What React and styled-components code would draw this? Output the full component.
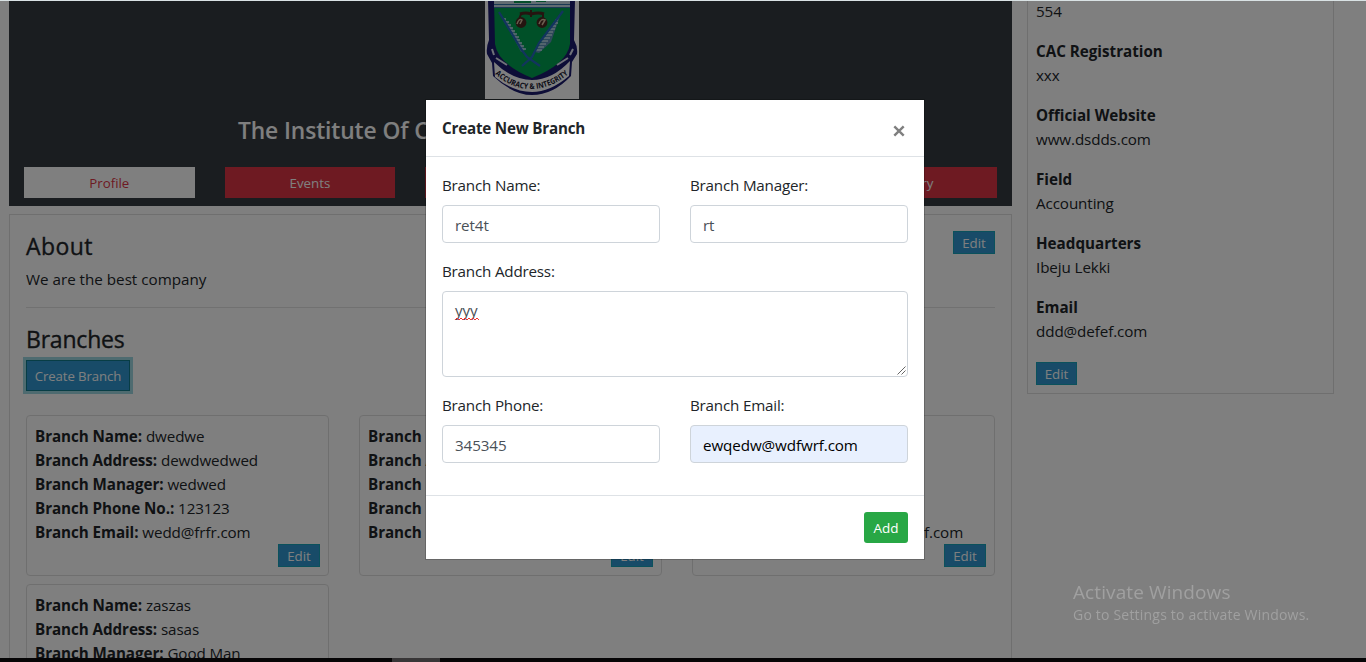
import React from 'react';
import styled, { createGlobalStyle } from 'styled-components';

const Global = createGlobalStyle`
  *, *::before, *::after { box-sizing: border-box; }
  html, body { margin: 0; padding: 0; height: 100%; overflow: hidden; }
  body {
    background: #fff;
    color: #212529;
    font-family: "Open Sans", "Noto Sans", sans-serif;
    font-size: 15.2px;
    letter-spacing: -0.1px;
    line-height: 24px;
  }
`;

const Screen = styled.div`
  width: 1366px;
  height: 662px;
  overflow: hidden;
`;

const Page = styled.div`
  display: flex;
  align-items: flex-start;
  gap: 15px;
  height: 658px;
  padding-left: 9px;
  overflow: hidden;
`;

const Main = styled.main`
  width: 1003px;
  flex: none;
`;

const Banner = styled.header`
  height: 206px;
  padding: 0 15px;
  background: #343a40;
  display: flex;
  flex-direction: column;
`;

const Crest = styled.svg`
  display: block;
  width: 94px;
  height: 99px;
  margin-left: 461px;
  flex: none;
`;

const OrgName = styled.h4`
  margin: 17px 0 22px;
  height: 29px;
  line-height: 29px;
  font-size: 22.8px;
  font-weight: 600;
  letter-spacing: -0.1px;
  color: #fff;
  text-align: center;
  white-space: nowrap;
`;

const Tabs = styled.nav`
  display: grid;
  grid-template-columns: repeat(5, 1fr);
  gap: 30px;
`;

const Tab = styled.a`
  height: 31px;
  line-height: 32px;
  text-align: center;
  font-size: 13.3px;
  letter-spacing: 0;
  background: ${(p) => (p.$active ? '#fff' : '#dc3545')};
  color: ${(p) => (p.$active ? '#dc3545' : '#fff')};
`;

const Panel = styled.section`
  margin-top: 8px;
  height: 480px;
  padding: 16px;
  border: 1px solid #dfdfdf;
`;

const PanelHead = styled.div`
  display: flex;
  justify-content: space-between;
  align-items: flex-start;
`;

const Heading = styled.h4`
  margin: 0 0 8px;
  height: 29px;
  line-height: 30px;
  font-size: 23px;
  font-weight: 500;
  letter-spacing: ${(p) => p.$tracking || 0}px;
  -webkit-text-stroke: 0.35px currentColor;
`;

const Paragraph = styled.p`
  margin: -1px 0 0;
  letter-spacing: 0;
`;

const Rule = styled.hr`
  margin: 16px 0 16px;
  border: 0;
  border-top: 1px solid #e2e2e2;
`;

const EditButton = styled.button`
  display: block;
  width: ${(p) => p.$width || 42}px;
  height: 23px;
  padding: 0;
  border: 1px solid #17a2b8;
  background: #3097d1;
  color: #fff;
  font: 13.3px/20px "Open Sans", sans-serif;
`;

const CreateButton = styled(EditButton)`
  width: 104px;
  height: 31px;
  margin-top: -1px;
  padding-top: 1px;
  font-size: 13.2px;
  letter-spacing: -0.1px;
  border-color: #117a8b;
  box-shadow: 0 0 0 3px rgba(58, 176, 195, 0.5);
`;

const BranchGrid = styled.div`
  display: grid;
  grid-template-columns: repeat(3, 303px);
  gap: 8px 30px;
  margin-top: 24px;
`;

const BranchCard = styled.article`
  height: 161px;
  padding: 8px;
  border: 1px solid #dfdfdf;
  border-radius: 4px;
  display: flex;
  flex-direction: column;
`;

const Line = styled.div`
  height: 24px;
  white-space: nowrap;
`;

const CardAction = styled.div`
  display: flex;
  justify-content: flex-end;
`;

const Sidebar = styled.aside`
  width: 307px;
  height: 394px;
  padding: 0 8px;
  border: 1px solid #dfdfdf;
  border-top: 0;
`;

const Facts = styled.div`
  margin-top: -1px;
`;

const Fact = styled.div`
  margin-bottom: 16px;
`;

const Label = styled.b`
  font-weight: 700;
  letter-spacing: ${(p) => (p.$compact ? -0.06 : 0)}px;
`;

const SideAction = styled.div`
  padding-top: 3px;
`;

const Backdrop = styled.div`
  position: fixed;
  inset: 0;
  background: rgba(0, 0, 0, 0.5);
`;

const Dialog = styled.div`
  position: fixed;
  left: 425px;
  top: 99px;
  width: 500px;
  height: 461px;
  background: #fff;
  background-clip: padding-box;
  border: 1px solid rgba(0, 0, 0, 0.2);
`;

const DialogHead = styled.div`
  display: flex;
  justify-content: space-between;
  height: 57px;
  padding: 17px 16px 0;
  border-bottom: 1px solid #dee2e6;
`;

const DialogTitle = styled.h6`
  margin: -1px 0 0;
  font-size: 15.2px;
  line-height: 24px;
  font-weight: 700;
  letter-spacing: -0.2px;
`;

const CloseIcon = styled.svg`
  width: 12px;
  height: 12px;
  margin: 8px 3px 0 0;
`;

const DialogBody = styled.div`
  display: grid;
  grid-template-columns: 218px 218px;
  column-gap: 30px;
  row-gap: 16px;
  height: 338px;
  padding: 16px 16px 0;
  align-content: start;
`;

const Field = styled.div`
  grid-column: ${(p) => (p.$wide ? '1 / -1' : 'auto')};
`;

const FieldLabel = styled.div`
  height: 32px;
  letter-spacing: -0.2px;
`;

const Control = styled.div`
  position: relative;
  height: ${(p) => (p.$tall ? 86 : 38)}px;
  padding: ${(p) => (p.$tall ? 6 : 7)}px 12px;
  border: 1px solid #ced4da;
  border-radius: 4px;
  background: ${(p) => (p.$filled ? '#e8f0fe' : '#fff')};
  color: ${(p) => (p.$filled ? '#000' : '#495057')};
`;

const Grip = styled.svg`
  position: absolute;
  right: 1px;
  bottom: 1px;
  width: 9px;
  height: 9px;
`;

const Squiggle = styled.svg`
  position: absolute;
  left: 12px;
  top: 25px;
  width: 24px;
  height: 4px;
`;

const DialogFoot = styled.div`
  display: flex;
  justify-content: flex-end;
  padding: 16px;
  border-top: 1px solid #dee2e6;
`;

const AddButton = styled.button`
  width: 44px;
  height: 31px;
  padding: 1px 0 0;
  border: 0;
  border-radius: 3px;
  background: #28a745;
  color: #fff;
  font: 500 13.5px/30px "Open Sans", sans-serif;
`;

const Watermark = styled.div`
  position: fixed;
  left: 1073px;
  top: 580px;
  color: #a0a0a0;
  white-space: nowrap;
`;

const WatermarkTitle = styled.div`
  font-size: 19px;
  line-height: 25px;
  letter-spacing: 0.1px;
`;

const WatermarkNote = styled.div`
  font-size: 14px;
  line-height: 20px;
  letter-spacing: 0.2px;
`;

const TopEdge = styled.div`
  position: fixed;
  inset: 0 0 auto 0;
  height: 1px;
  background: #d9e2e4;
`;

const Taskbar = styled.div`
  position: fixed;
  inset: auto 0 0 0;
  height: 4px;
  padding-left: 392px;
  background: #060506;
`;

const TaskbarItem = styled.div`
  width: 48px;
  height: 4px;
  background: #383637;
`;

const branches = [
  ['dwedwe', 'dewdwedwed', 'wedwed', '123123', 'wedd@frfr.com'],
  ['', '', '', '', ''],
  ['', '', '', '', 'ewqedw@wdfwrf.com'],
  ['zaszas', 'sasas', 'Good Man', '', ''],
];
const branchLabels = ['Name', 'Address', 'Manager', 'Phone No.', 'Email'];

const facts = [
  ['CAC Registration', 'xxx'],
  ['Official Website', 'www.dsdds.com'],
  ['Field', 'Accounting'],
  ['Headquarters', 'Ibeju Lekki'],
  ['Email', 'ddd@defef.com'],
];

function InstituteCrest() {
  return (
    <Crest viewBox="0 0 94 99">
      <rect width="94" height="99" fill="#fff" />
      <path d="M3 0 L4 40 Q1 47 2 54 L7 63 L8 76 Q28 95 47 95 Q68 95 86 76 L87 62 L92 54 Q93 47 89 40 L90 0Z" fill="#1b1a6e" />
      <path d="M9 0 H85 V44 Q82 64 47 78 Q13 64 10 44Z" fill="#00a050" />
      <path d="M9 0 H85 V7 H9Z" fill="#c4d8e4" />
      <path d="M9 4.5 H85 M9 7.5 H85" stroke="#3474a8" strokeWidth="1" />
      <path d="M29 2 H46 M51 1 H61" stroke="#0d9c55" strokeWidth="2" />
      <path d="M7 49 L9 55 M11 58 L22 65 M88 49 L85 55 M83 58 L72 65" stroke="#dfe4f2" strokeWidth="2" />
      <path d="M9 62 Q27 80 47 80 Q67 80 85 61 L84 76 Q65 92 47 92 Q28 92 10 77Z" fill="#fff" />
      <path d="M17 16 L27 28 L40 50 L36 52Z" fill="#5c90b4" />
      <path d="M75 16 L66 28 L50 52 L54 53 L66 42Z" fill="#5c90b4" />
      <path d="M18 19 H21 M19 22 H24 M21 25 H26 M23 28 H28 M25 31 H30 M26 34 H32 M28 37 H34 M30 40 H35 M32 43 H37 M34 46 H39 M36 49 H41 M70 20 H73 M68 23 H73 M66 26 H71 M64 29 H70 M62 32 H68 M60 35 H67 M58 38 H65 M56 41 H63 M54 44 H61 M52 47 H59 M50 50 H57" stroke="#bcdce8" strokeWidth="1.4" />
      <path d="M14 12 L36 49 L42 57 L55 66 M78 11 L54 43 L47 57 L37 66" stroke="#2468be" strokeWidth="2.2" fill="none" />
      <path d="M35 14 Q41 12 46 14 Q54 12 59 14" fill="none" stroke="#4b2820" strokeWidth="3" />
      <path d="M36 14 L33 22 M58 14 L58 22 M46 10 V17" stroke="#4b2820" strokeWidth="2" />
      <circle cx="36" cy="22.5" r="5.4" fill="#4b2820" />
      <circle cx="57" cy="22.5" r="5.4" fill="#4b2820" />
      <path d="M32 24 Q34 18 37 20 L35 24 M54 24 Q56 18 60 20 L57 25" stroke="#d8bda0" strokeWidth="1.5" fill="none" />
      <path id="motto" d="M10 74 Q28 90 48 89 Q68 88 86 72" fill="none" />
      <text fontSize="7.8" fontWeight="700" fill="#15152e" fontFamily="Open Sans, sans-serif" letterSpacing="0">
        <textPath href="#motto" textLength="81" lengthAdjust="spacingAndGlyphs">ACCURACY &amp; INTEGRITY</textPath>
      </text>
    </Crest>
  );
}

export default function App() {
  return (
    <Screen>
      <Global />
      <Page>
        <Main>
          <Banner>
            <InstituteCrest />
            <OrgName>The Institute Of Chartered Accountants Of Nigeria</OrgName>
            <Tabs>
              <Tab $active>Profile</Tab>
              <Tab>Events</Tab>
              <Tab />
              <Tab />
              <Tab>Gallery</Tab>
            </Tabs>
          </Banner>
          <Panel>
            <PanelHead>
              <Heading $tracking={0.4}>About</Heading>
              <EditButton>Edit</EditButton>
            </PanelHead>
            <Paragraph>We are the best company</Paragraph>
            <Rule />
            <Heading $tracking={-0.2}>Branches</Heading>
            <CreateButton>Create Branch</CreateButton>
            <BranchGrid>
              {branches.map((values, i) => (
                <BranchCard key={i}>
                  {branchLabels.map((label, j) => (
                    <Line key={label}>
                      <Label $compact>Branch {label}:</Label> {values[j]}
                    </Line>
                  ))}
                  <CardAction>
                    <EditButton>Edit</EditButton>
                  </CardAction>
                </BranchCard>
              ))}
            </BranchGrid>
          </Panel>
        </Main>
        <Sidebar>
          <Facts>
            <Fact>554</Fact>
            {facts.map(([label, value]) => (
              <Fact key={label}>
                <Line><Label>{label}</Label></Line>
                <Line>{value}</Line>
              </Fact>
            ))}
          </Facts>
          <SideAction>
            <EditButton $width={41}>Edit</EditButton>
          </SideAction>
        </Sidebar>
      </Page>
      <Backdrop />
      <Dialog>
        <DialogHead>
          <DialogTitle>Create New Branch</DialogTitle>
          <CloseIcon viewBox="0 0 12 12">
            <path d="M1.3 1.3 L10.7 10.7 M10.7 1.3 L1.3 10.7" stroke="#7f7f7f" strokeWidth="2.4" />
          </CloseIcon>
        </DialogHead>
        <DialogBody>
          <Field>
            <FieldLabel>Branch Name:</FieldLabel>
            <Control>ret4t</Control>
          </Field>
          <Field>
            <FieldLabel>Branch Manager:</FieldLabel>
            <Control>rt</Control>
          </Field>
          <Field $wide>
            <FieldLabel>Branch Address:</FieldLabel>
            <Control $tall>
              yyy
              <Squiggle viewBox="0 0 24 4">
                <path d="M0 3 L2 1 L4 3 L6 1 L8 3 L10 1 L12 3 L14 1 L16 3 L18 1 L20 3 L22 1 L24 3" fill="none" stroke="#f03030" strokeWidth="1" />
              </Squiggle>
              <Grip viewBox="0 0 9 9">
                <path d="M0.5 8.5 L8.5 0.5 M4.5 8.5 L8.5 4.5" stroke="#555" strokeWidth="0.9" />
              </Grip>
            </Control>
          </Field>
          <Field>
            <FieldLabel>Branch Phone:</FieldLabel>
            <Control>345345</Control>
          </Field>
          <Field>
            <FieldLabel>Branch Email:</FieldLabel>
            <Control $filled>ewqedw@wdfwrf.com</Control>
          </Field>
        </DialogBody>
        <DialogFoot>
          <AddButton>Add</AddButton>
        </DialogFoot>
      </Dialog>
      <Watermark>
        <WatermarkTitle>Activate Windows</WatermarkTitle>
        <WatermarkNote>Go to Settings to activate Windows.</WatermarkNote>
      </Watermark>
      <TopEdge />
      <Taskbar>
        <TaskbarItem />
      </Taskbar>
    </Screen>
  );
}
